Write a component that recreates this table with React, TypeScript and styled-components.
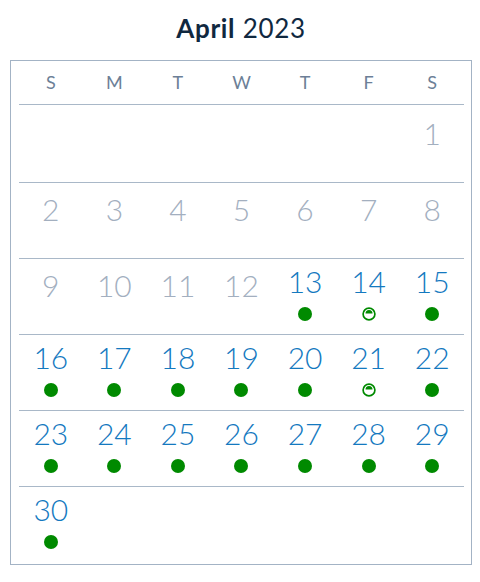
import React from "react";
import styled, { createGlobalStyle } from "styled-components";

const Global = createGlobalStyle`
  html, body { margin: 0; padding: 0; background: #ffffff; }
  body { font-family: Lato, "Noto Sans", "Liberation Sans", sans-serif; }
`;

const Page = styled.div`
  width: 480px;
  height: 582px;
  box-sizing: border-box;
  padding: 0 8px 0 10px;
`;

const Title = styled.h1`
  margin: 0;
  box-sizing: border-box;
  height: 60px;
  padding-top: 13px;
  text-align: center;
  font-size: 26px;
  line-height: 30px;
  font-weight: 400;
  color: #10283f;
  letter-spacing: 0.7px;
`;

const Month = styled.span`
  font-weight: 700;
`;

const Frame = styled.div`
  box-sizing: border-box;
  width: 462px;
  border: 1px solid #a3b3c5;
  padding: 0 7px 0 8px;
`;

const Grid7 = styled.div`
  display: grid;
  grid-template-columns: repeat(7, 1fr);
`;

const WeekdayRow = styled(Grid7)`
  height: 43px;
  border-bottom: 1px solid #a9b8c8;
`;

const Weekday = styled.div`
  text-align: center;
  font-size: 18px;
  line-height: 43px;
  font-weight: 400;
  color: #6c7f97;
`;

const Weeks = styled.div`
  padding: 2px 0;
`;

const Week = styled(Grid7)`
  height: 76px;
  box-sizing: border-box;
  border-bottom: 1px solid #a9b8c8;
  &:last-child {
    height: 75px;
    border-bottom: none;
  }
`;

const Cell = styled.div<{ $marked: boolean }>`
  display: flex;
  flex-direction: column;
  align-items: center;
  justify-content: center;
  padding-bottom: ${(p) => (p.$marked ? 6 : 23)}px;
`;

const Num = styled.div<{ $past: boolean }>`
  font-size: 30px;
  line-height: 30px;
  font-weight: 300;
  color: ${(p) => (p.$past ? "#a3afbf" : "#1479bf")};
`;

const Dot = styled.div`
  margin-top: 11px;
  width: 14px;
  height: 14px;
  border-radius: 50%;
  background: #008a00;
`;

const PartialIcon = styled.svg`
  margin-top: 11px;
  width: 14px;
  height: 14px;
  display: block;
`;

type Status = "full" | "partial" | null;

const Partial = () => (
  <PartialIcon viewBox="0 0 14 14">
    <circle cx="7" cy="7" r="5.9" fill="none" stroke="#008a00" strokeWidth="1.7" />
    <path d="M3.5 6.6 A3.5 3.5 0 0 1 10.5 6.6 Z" fill="#008a00" />
  </PartialIcon>
);

const days: { d: number; status: Status }[] = Array.from({ length: 30 }, (_, i) => {
  const d = i + 1;
  let status: Status = null;
  if (d >= 13) status = d === 14 || d === 21 ? "partial" : "full";
  return { d, status };
});

const cells: ({ d: number; status: Status } | null)[] = [
  ...Array(6).fill(null),
  ...days,
];
while (cells.length % 7) cells.push(null);
const weeks: typeof cells[] = [];
for (let i = 0; i < cells.length; i += 7) weeks.push(cells.slice(i, i + 7));

const labels = ["S", "M", "T", "W", "T", "F", "S"];

export default function App() {
  return (
    <Page>
      <Global />
      <Title>
        <Month>April</Month> 2023
      </Title>
      <Frame>
        <WeekdayRow>
          {labels.map((l, i) => (
            <Weekday key={i}>{l}</Weekday>
          ))}
        </WeekdayRow>
        <Weeks>
          {weeks.map((w, wi) => (
            <Week key={wi}>
              {w.map((c, ci) =>
                c ? (
                  <Cell key={ci} $marked={!!c.status}>
                    <Num $past={c.d < 13}>{c.d}</Num>
                    {c.status === "full" && <Dot />}
                    {c.status === "partial" && <Partial />}
                  </Cell>
                ) : (
                  <Cell key={ci} $marked={false} />
                )
              )}
            </Week>
          ))}
        </Weeks>
      </Frame>
    </Page>
  );
}
